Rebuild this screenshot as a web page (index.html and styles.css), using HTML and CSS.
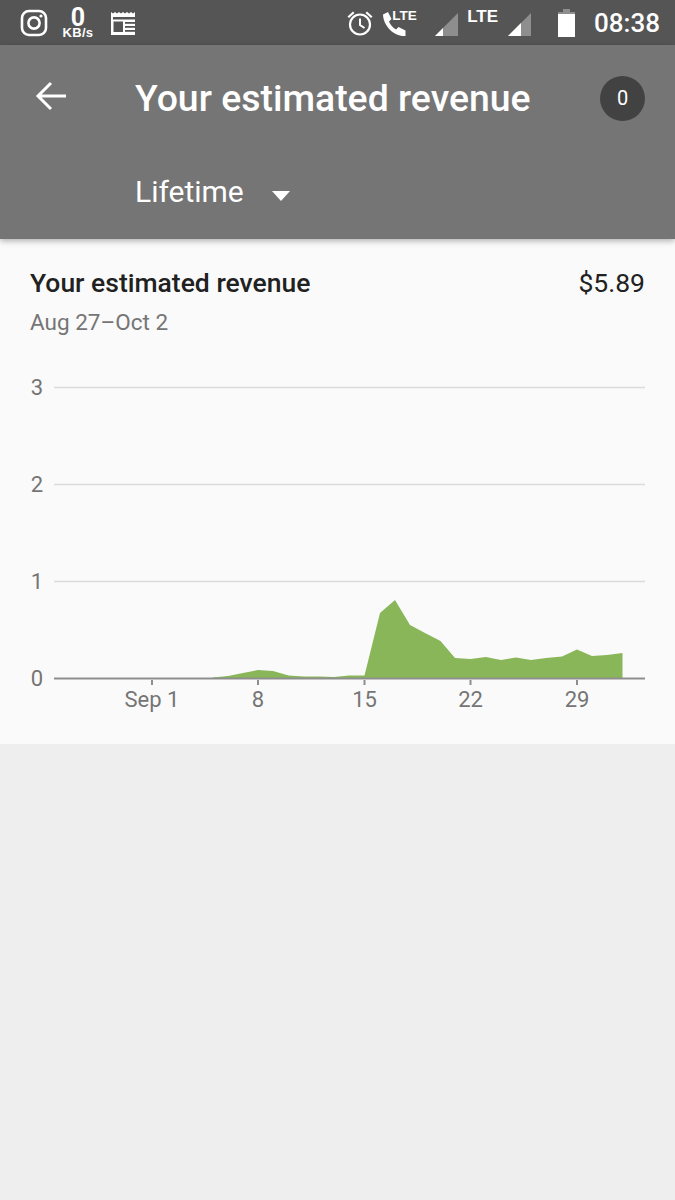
FILE: index.html
```html
<!DOCTYPE html>
<html lang="en">
<head>
  <meta charset="UTF-8">
  <meta name="viewport" content="width=device-width, initial-scale=1.0">
  <title>Your estimated revenue</title>
  <link rel="stylesheet" href="styles.css">
</head>
<body>
  <!-- Status bar -->
  <div class="status-bar">
    <div class="status-left">
      <svg class="icon-insta" width="28" height="28" viewBox="0 0 28 28">
        <rect x="2" y="2" width="24" height="24" rx="7" fill="none" stroke="#fff" stroke-width="2.6"/>
        <circle cx="14" cy="14" r="5.6" fill="none" stroke="#fff" stroke-width="2.6"/>
        <circle cx="21" cy="7" r="1.6" fill="#fff"/>
      </svg>
      <div class="speed">
        <span class="speed-num">0</span>
        <span class="speed-unit">KB/s</span>
      </div>
      <svg class="icon-news" width="28" height="26" viewBox="0 0 28 26">
        <path d="M1 2l2 1.500 2-1.500 2 1.500 2-1.500 2 1.500 2-1.500 2 1.500 2-1.500 2 1.500 2-1.500 2 1.500 2-1.500V25H1z" fill="#fff"/>
        <rect x="3" y="7" width="22" height="2.500" fill="#555"/>
        <rect x="3.500" y="11.500" width="9.500" height="10.500" fill="#555"/>
        <rect x="15" y="12" width="10" height="1.800" fill="#555"/>
        <rect x="15" y="16" width="10" height="1.800" fill="#555"/>
        <rect x="15" y="20" width="10" height="1.800" fill="#555"/>
      </svg>
    </div>
    <div class="status-right">
      <svg class="icon-alarm" width="28" height="28" viewBox="0 0 28 28">
        <circle cx="14" cy="15.500" r="10" fill="none" stroke="#fff" stroke-width="2.200"/>
        <path d="M14 9.500v6.500l4.500 3" fill="none" stroke="#fff" stroke-width="2"/>
        <path d="M1.500 7.500l5.500-5 1.500 1.500-5.500 5zM26.500 7.500l-5.500-5-1.500 1.500 5.500 5z" fill="#fff"/>
      </svg>
      <div class="call-lte">
        <svg width="25" height="26" viewBox="0 0 25 26">
          <path d="M1 3.500l5-2.500 3.500 7-2.500 2.500c1 3 4 6.500 7 8l2.500-2.500 7 3.500v5.500c-11 1-22-9.500-22.500-21.500z" fill="#fff"/>
        </svg>
        <span class="lte-small">LTE</span>
      </div>
      <svg class="icon-signal" width="24" height="24" viewBox="0 0 24 24">
        <path d="M0 24L23 1v23z" fill="#8e8e8e"/>
        <path d="M0 24l8-8v8z" fill="#fff"/>
      </svg>
      <span class="lte-big">LTE</span>
      <svg class="icon-signal-2" width="24" height="24" viewBox="0 0 24 24">
        <path d="M0 24L23 1v23z" fill="#8e8e8e"/>
        <path d="M0 24l13-13v13z" fill="#fff"/>
      </svg>
      <svg class="icon-battery" width="17" height="28" viewBox="0 0 17 28">
        <path d="M5 0h7v3H5z" fill="#8e8e8e"/>
        <path d="M0 3h17v3H0z" fill="#8e8e8e"/>
        <path d="M0 5h17v23H0z" fill="#fff"/>
      </svg>
      <span class="clock">08:38</span>
    </div>
  </div>

  <!-- Header -->
  <header class="app-header">
    <div class="header-row">
      <svg class="back-arrow" width="32" height="30" viewBox="0 0 32 30">
        <path d="M31 15H3M16 2L3 15l13 13" fill="none" stroke="#fff" stroke-width="3"/>
      </svg>
      <h1>Your estimated revenue</h1>
      <span class="badge">0</span>
    </div>
    <div class="range-row">
      <span class="range-label">Lifetime</span>
      <span class="range-caret"></span>
    </div>
  </header>

  <!-- Revenue card -->
  <section class="card">
    <div class="card-head">
      <h2>Your estimated revenue</h2>
      <span class="amount">$5.89</span>
    </div>
    <p class="dates">Aug 27–Oct 2</p>
    <svg class="chart" width="675" height="344" viewBox="0 370 675 344">
      <g class="grid-lines">
        <line x1="54" y1="387.500" x2="645" y2="387.500"/>
        <line x1="54" y1="484.500" x2="645" y2="484.500"/>
        <line x1="54" y1="581.500" x2="645" y2="581.500"/>
      </g>
      <polygon class="area" points="212,678.500 212.700,677.500 228,676 243,673 258,670 273,671 288.600,675.500 304,676.500 319,676.500 334,677 349,675.500 364.500,675.500 380,613 395,600 410,625 425,633 440.500,641 455,658 470.500,659 486,657 501,660 516,657.500 531,660 546,658 562,656.500 577,649.500 592,656 607,655 622.500,653 622.500,678.500"/>
      <line class="axis" x1="54" y1="678.500" x2="645" y2="678.500"/>
      <g class="ticks">
        <line x1="152" y1="680" x2="152" y2="685"/>
        <line x1="258" y1="680" x2="258" y2="685"/>
        <line x1="364.500" y1="680" x2="364.500" y2="685"/>
        <line x1="470.500" y1="680" x2="470.500" y2="685"/>
        <line x1="577" y1="680" x2="577" y2="685"/>
      </g>
      <g class="y-labels">
        <text x="43" y="395">3</text>
        <text x="43" y="492">2</text>
        <text x="43" y="589">1</text>
        <text x="43" y="686">0</text>
      </g>
      <g class="x-labels">
        <text x="152" y="707">Sep 1</text>
        <text x="258" y="707">8</text>
        <text x="364.500" y="707">15</text>
        <text x="470.500" y="707">22</text>
        <text x="577" y="707">29</text>
      </g>
    </svg>
  </section>
</body>
</html>
```

FILE: styles.css
```css
/* Base styles */
* {
  margin: 0;
  padding: 0;
  box-sizing: border-box;
}

body {
  font-family: Roboto, "Liberation Sans", sans-serif;
  min-height: 1200px;
  background: #eeeeee;
  color: #212121;
  overflow: hidden;
}

svg {
  display: block;
  flex: none;
}

/* Status bar */
.status-bar {
  height: 45px;
  background: #555555;
  color: #fff;
  display: flex;
  justify-content: space-between;
  align-items: center;
  padding: 0 15px 0 20px;
}

.status-left,
.status-right {
  display: flex;
  align-items: center;
}

.speed {
  width: 36px;
  margin-left: 12px;
  display: flex;
  flex-direction: column;
  align-items: center;
  font-weight: 700;
  line-height: 1;
}

.speed-num {
  font-size: 25px;
  height: 19px;
  line-height: 21px;
}

.speed-unit {
  font-size: 13px;
  height: 13px;
  line-height: 13px;
  letter-spacing: 0.3px;
  font-family: "Liberation Sans", sans-serif;
}

.icon-news {
  margin: 1px 0 0 14px;
}

.icon-alarm {
  margin-right: 8px;
}

.call-lte {
  position: relative;
  width: 34px;
  height: 28px;
  padding-top: 2px;
}

.lte-small {
  position: absolute;
  left: 10px;
  top: -1px;
  font-size: 13.500px;
  font-weight: 700;
  font-family: "Liberation Sans", sans-serif;
}

.icon-signal {
  margin-left: 19px;
  margin-top: 3px;
}

.lte-big {
  font-size: 17px;
  font-weight: 700;
  margin: -11px 0 0 8px;
  font-family: "Liberation Sans", sans-serif;
}

.icon-signal-2 {
  margin-left: 10px;
  margin-top: 3px;
}

.icon-battery {
  margin-left: 26px;
}

.clock {
  font-size: 26px;
  font-weight: 500;
  margin-left: 19px;
}

/* Header */
.app-header {
  height: 194px;
  background: #757575;
  color: #fff;
  box-shadow: 0 2px 6px rgba(0, 0, 0, 0.3);
  position: relative;
}

.header-row {
  display: flex;
  align-items: center;
  height: 106px;
  padding: 0 30px 0 35px;
}

.back-arrow {
  margin: -4px 68px 0 0;
}

h1 {
  flex: 1;
  font-size: 37.400px;
  font-weight: 500;
}

.badge {
  width: 45px;
  height: 45px;
  border-radius: 50%;
  background: #424242;
  font-size: 20px;
  display: flex;
  align-items: center;
  justify-content: center;
}

.range-row {
  display: flex;
  align-items: center;
  padding-left: 135px;
  margin-top: 23px;
}

.range-label {
  font-size: 30px;
}

.range-caret {
  width: 0;
  height: 0;
  margin: 8px 0 0 28px;
  border-left: 9.500px solid transparent;
  border-right: 9.500px solid transparent;
  border-top: 10px solid #fff;
}

/* Revenue card */
.card {
  height: 505px;
  background: #fafafa;
}

.card-head {
  display: flex;
  justify-content: space-between;
  align-items: center;
  padding: 28px 30px 0;
}

h2 {
  font-size: 26.500px;
  font-weight: 500;
}

.amount {
  font-size: 26.500px;
}

.dates {
  font-size: 22.500px;
  color: #757575;
  padding: 11px 30px 0;
}

/* Chart */
.chart {
  margin-top: 35px;
}

.grid-lines line {
  stroke: #dcdcdc;
  stroke-width: 1.500;
}

.area {
  fill: #88b658;
}

.axis {
  stroke: #8e8e8e;
  stroke-width: 2;
}

.ticks line {
  stroke: #8e8e8e;
  stroke-width: 2;
}

.chart text {
  font-size: 22px;
  fill: #757575;
}

.y-labels text {
  text-anchor: end;
}

.x-labels text {
  text-anchor: middle;
}
```
